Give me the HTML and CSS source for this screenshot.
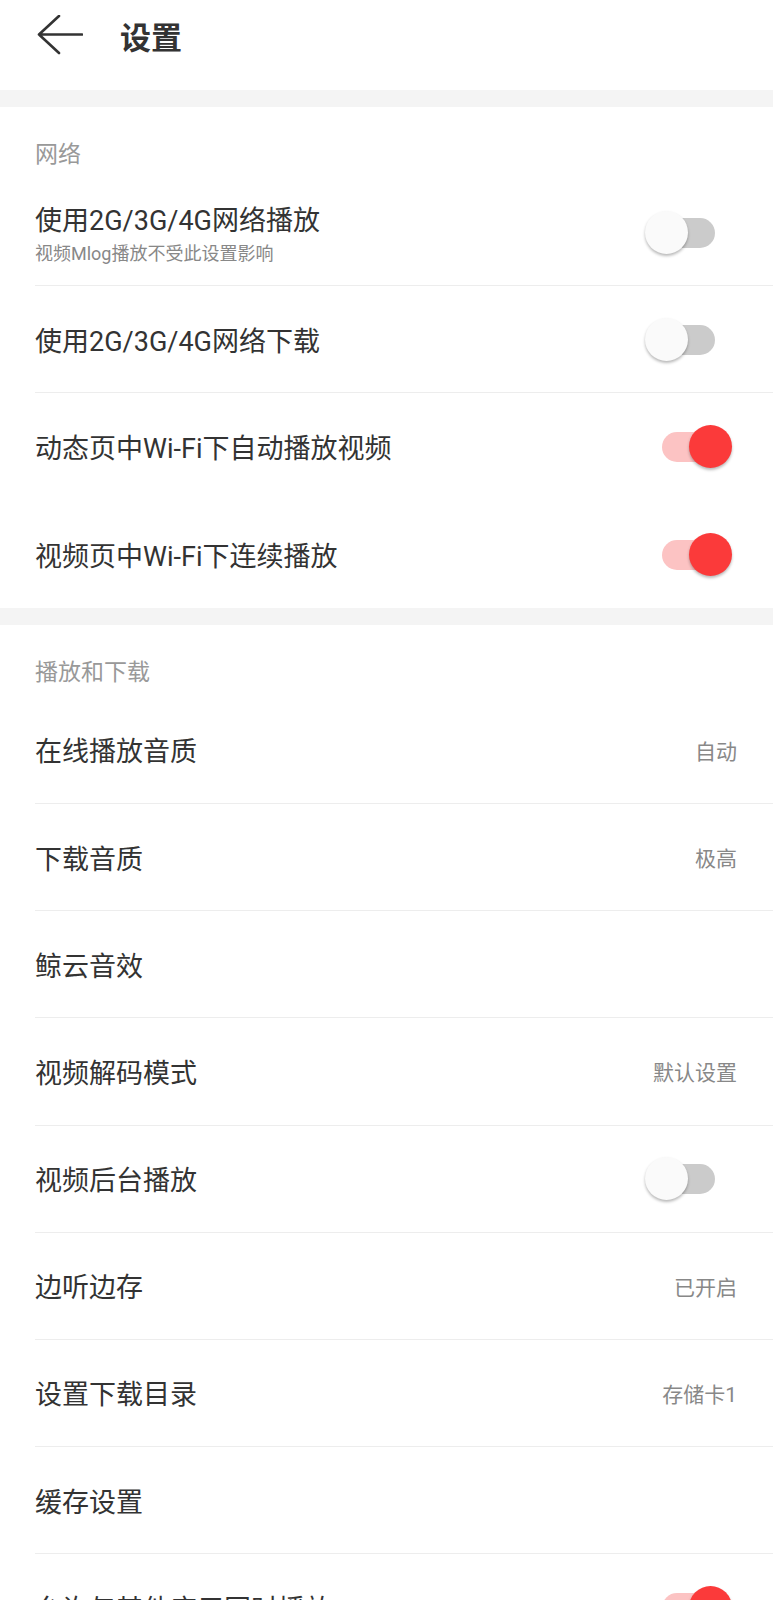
FILE: index.html
```html
<!DOCTYPE html>
<html lang="zh-CN">
<head>
  <meta charset="UTF-8">
  <title>设置</title>
  <link rel="stylesheet" href="styles.css">
</head>
<body>
  <div class="header">
    <svg class="back" width="46" height="40" viewBox="0 0 46 40">
      <path d="M22 1 L2 19.5 L22 38 M2 19.5 H45" fill="none" stroke="#333" stroke-width="2.6" stroke-linecap="round" stroke-linejoin="round"/>
    </svg>
    <div class="title">设置</div>
  </div>

  <div class="band"></div>

  <div class="section">
    <div class="section-label">网络</div>
    <div class="row">
      <div class="row-text">
        <div class="row-title">使用2G/3G/4G网络播放</div>
        <div class="row-sub">视频Mlog播放不受此设置影响</div>
      </div>
      <div class="switch"><span class="track"></span><span class="knob"></span></div>
    </div>
    <div class="row">
      <div class="row-title">使用2G/3G/4G网络下载</div>
      <div class="switch"><span class="track"></span><span class="knob"></span></div>
    </div>
    <div class="row no-line">
      <div class="row-title">动态页中Wi-Fi下自动播放视频</div>
      <div class="switch on"><span class="track"></span><span class="knob"></span></div>
    </div>
    <div class="row no-line">
      <div class="row-title">视频页中Wi-Fi下连续播放</div>
      <div class="switch on"><span class="track"></span><span class="knob"></span></div>
    </div>
  </div>

  <div class="band"></div>

  <div class="section">
    <div class="section-label">播放和下载</div>
    <div class="row">
      <div class="row-title">在线播放音质</div>
      <div class="row-value">自动</div>
    </div>
    <div class="row">
      <div class="row-title">下载音质</div>
      <div class="row-value">极高</div>
    </div>
    <div class="row">
      <div class="row-title">鲸云音效</div>
    </div>
    <div class="row">
      <div class="row-title">视频解码模式</div>
      <div class="row-value">默认设置</div>
    </div>
    <div class="row">
      <div class="row-title">视频后台播放</div>
      <div class="switch"><span class="track"></span><span class="knob"></span></div>
    </div>
    <div class="row">
      <div class="row-title">边听边存</div>
      <div class="row-value">已开启</div>
    </div>
    <div class="row">
      <div class="row-title">设置下载目录</div>
      <div class="row-value">存储卡1</div>
    </div>
    <div class="row">
      <div class="row-title">缓存设置</div>
    </div>
    <div class="row">
      <div class="row-title">允许与其他应用同时播放</div>
      <div class="switch on"><span class="track"></span><span class="knob"></span></div>
    </div>
  </div>
</body>
</html>
```

FILE: styles.css
```css
body {
  margin: 0;
  font-family: Roboto, "Noto Sans CJK SC", sans-serif;
  background-color: #fff;
  color: #333;
}

.header {
  height: 70px;
  padding-bottom: 20px;
  display: flex;
  align-items: center;
}

.back {
  margin-left: 37px;
}

.title {
  margin-left: 37px;
  font-size: 31px;
  font-weight: 700;
  color: #333;
}

.band {
  height: 17px;
  background-color: #f4f4f4;
}

.section-label {
  height: 72px;
  box-sizing: border-box;
  padding: 18px 0 0 35px;
  display: flex;
  align-items: center;
  font-size: 23px;
  color: #999;
}

.row {
  height: 107.2px;
  box-sizing: border-box;
  margin-left: 35px;
  padding-right: 36px;
  border-bottom: 1px solid #ededed;
  display: flex;
  align-items: center;
  justify-content: space-between;
}

.row.no-line {
  border-bottom: none;
}

.row-title {
  font-size: 27px;
  color: #333;
}

.row-sub {
  font-size: 18px;
  color: #888;
  margin-top: 1px;
}

.row-value {
  font-size: 21px;
  color: #888;
}

.switch {
  position: relative;
  width: 87px;
  height: 43px;
  margin-right: 5px;
}

.switch .track {
  position: absolute;
  left: 17px;
  top: 7px;
  width: 53px;
  height: 30px;
  border-radius: 15px;
  background-color: #cbcbcb;
}

.switch .knob {
  position: absolute;
  left: 0;
  top: 0;
  width: 43px;
  height: 43px;
  border-radius: 50%;
  background-color: #fafafa;
  box-shadow: 0 2px 3px rgba(0, 0, 0, 0.28);
}

.switch.on .track {
  background-color: #fcc3c3;
}

.switch.on .knob {
  left: 44px;
  background-color: #fb3a3a;
}
```
